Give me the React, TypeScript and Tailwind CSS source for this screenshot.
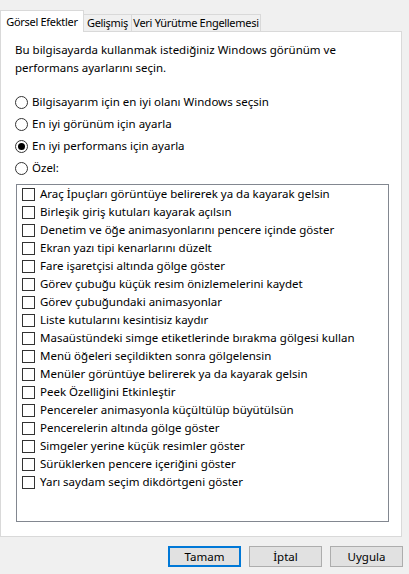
import React from "react";

const effects = [
  "Araç İpuçları görüntüye belirerek ya da kayarak gelsin",
  "Birleşik giriş kutuları kayarak açılsın",
  "Denetim ve öğe animasyonlarını pencere içinde göster",
  "Ekran yazı tipi kenarlarını düzelt",
  "Fare işaretçisi altında gölge göster",
  "Görev çubuğu küçük resim önizlemelerini kaydet",
  "Görev çubuğundaki animasyonlar",
  "Liste kutularını kesintisiz kaydır",
  "Masaüstündeki simge etiketlerinde bırakma gölgesi kullan",
  "Menü öğeleri seçildikten sonra gölgelensin",
  "Menüler görüntüye belirerek ya da kayarak gelsin",
  "Peek Özelliğini Etkinleştir",
  "Pencereler animasyonla küçültülüp büyütülsün",
  "Pencerelerin altında gölge göster",
  "Simgeler yerine küçük resimler göster",
  "Sürüklerken pencere içeriğini göster",
  "Yarı saydam seçim dikdörtgeni göster",
];

const options = [
  "Bilgisayarım için en iyi olanı Windows seçsin",
  "En iyi görünüm için ayarla",
  "En iyi performans için ayarla",
  "Özel:",
];

function Radio({ checked }: { checked: boolean }) {
  return (
    <span className="flex h-[13px] w-[13px] shrink-0 items-center justify-center rounded-full border border-[#333333] bg-white">
      {checked && <span className="h-[7px] w-[7px] rounded-full bg-[#000000]" />}
    </span>
  );
}

export default function App() {
  return (
    <div
      className="flex h-[574px] w-[409px] flex-col bg-[#f0f0f0] text-[11.5px] text-black"
      style={{ fontFamily: '"Noto Sans", "Open Sans", sans-serif' }}
    >
      {/* tabs */}
      <div className="mt-[10px] flex h-[22px] items-end whitespace-nowrap text-[11px] tracking-[-0.3px]">
        <div className="relative z-10 flex h-[22px] w-[84px] shrink-0 justify-center border border-b-0 border-[#d9d9d9] bg-white pt-[3px]">
          Görsel Efektler
        </div>
        <div className="flex h-[18px] w-[48px] shrink-0 items-center justify-center border border-b-0 border-l-0 border-[#d9d9d9] bg-[#f0f0f0]">
          Gelişmiş
        </div>
        <div className="flex h-[18px] w-[129px] shrink-0 items-center justify-center border border-b-0 border-l-0 border-[#d9d9d9] bg-[#f0f0f0]">
          Veri Yürütme Engellemesi
        </div>
      </div>

      {/* panel */}
      <div className="-mt-px flex h-[506px] w-[402px] flex-col border border-[#d9d9d9] bg-white pl-[14px]">
        <p className="mt-[9px] leading-[18px]">
          Bu bilgisayarda kullanmak istediğiniz Windows görünüm ve
          <br />
          performans ayarlarını seçin.
        </p>

        <div className="mt-[14px] flex flex-col">
          {options.map((o, i) => (
            <label key={o} className="flex h-[22px] items-center gap-[4px] whitespace-nowrap">
              <Radio checked={i === 2} />
              <span>{o}</span>
            </label>
          ))}
        </div>

        <div className="ml-px mt-[5px] flex h-[338px] w-[373px] flex-col border border-[#828790] bg-white pl-[5px]">
          {effects.map((e) => (
            <label key={e} className="flex h-[18px] items-center gap-[5px] whitespace-nowrap">
              <span className="h-[13px] w-[13px] shrink-0 border border-[#333333] bg-white" />
              <span>{e}</span>
            </label>
          ))}
        </div>
      </div>

      {/* buttons */}
      <div className="mt-[9px] flex justify-end gap-[8px] pr-[6px]">
        <button className="h-[21px] w-[73px] border-2 border-[#0078d7] bg-[#e1e1e1]">
          Tamam
        </button>
        <button className="h-[21px] w-[73px] border border-[#adadad] bg-[#e1e1e1]">
          İptal
        </button>
        <button className="h-[21px] w-[73px] border border-[#adadad] bg-[#e1e1e1]">
          Uygula
        </button>
      </div>
    </div>
  );
}
